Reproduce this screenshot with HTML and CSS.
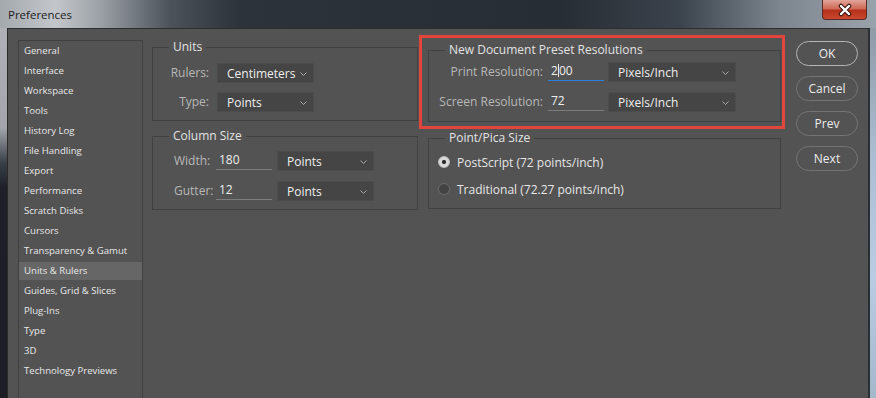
FILE: index.html
```html
<!DOCTYPE html>
<html lang="en">
<head>
  <meta charset="UTF-8">
  <title>Preferences</title>
  <link rel="stylesheet" href="styles.css">
</head>
<body>

  <div class="window">
    <div class="titlebar">
      <span class="title">Preferences</span>
      <div class="close">
        <svg width="20" height="14" viewBox="0 0 20 14">
          <path d="M6 3 L14 11 M14 3 L6 11" stroke="#3a1410" stroke-width="4.5" stroke-linecap="round"/>
          <path d="M6 3 L14 11 M14 3 L6 11" stroke="#ffffff" stroke-width="2.4" stroke-linecap="round"/>
        </svg>
      </div>
    </div>

    <div class="frame">
      <div class="edgeLeft"></div>

      <div class="content">
        <ul class="nav">
          <li>General</li>
          <li>Interface</li>
          <li>Workspace</li>
          <li>Tools</li>
          <li>History Log</li>
          <li>File Handling</li>
          <li>Export</li>
          <li>Performance</li>
          <li>Scratch Disks</li>
          <li>Cursors</li>
          <li>Transparency &amp; Gamut</li>
          <li class="selected">Units &amp; Rulers</li>
          <li>Guides, Grid &amp; Slices</li>
          <li>Plug-Ins</li>
          <li>Type</li>
          <li>3D</li>
          <li>Technology Previews</li>
        </ul>

        <div class="colLeft">
          <fieldset class="group units">
            <legend>Units</legend>
            <div class="rows unitRows">
              <label>Rulers:</label>
              <div class="select">Centimeters <svg class="chev" width="7" height="4" viewBox="0 0 7 4"><path d="M0.5 0.5 L3.5 3.5 L6.5 0.5" fill="none" stroke="#a8a8a8"/></svg></div>
              <label>Type:</label>
              <div class="select">Points <svg class="chev" width="7" height="4" viewBox="0 0 7 4"><path d="M0.5 0.5 L3.5 3.5 L6.5 0.5" fill="none" stroke="#a8a8a8"/></svg></div>
            </div>
          </fieldset>

          <fieldset class="group columns">
            <legend>Column Size</legend>
            <div class="rows columnRows">
              <label>Width:</label>
              <div class="field">180</div>
              <div class="select">Points <svg class="chev" width="7" height="4" viewBox="0 0 7 4"><path d="M0.5 0.5 L3.5 3.5 L6.5 0.5" fill="none" stroke="#a8a8a8"/></svg></div>
              <label>Gutter:</label>
              <div class="field">12</div>
              <div class="select">Points <svg class="chev" width="7" height="4" viewBox="0 0 7 4"><path d="M0.5 0.5 L3.5 3.5 L6.5 0.5" fill="none" stroke="#a8a8a8"/></svg></div>
            </div>
          </fieldset>
        </div>

        <div class="colRight">
          <div class="marker"></div>

          <fieldset class="group preset">
            <legend>New Document Preset Resolutions</legend>
            <div class="rows presetRows">
              <label>Print Resolution:</label>
              <div class="field focused">2<span class="caret"></span>00</div>
              <div class="select">Pixels/Inch <svg class="chev" width="7" height="4" viewBox="0 0 7 4"><path d="M0.5 0.5 L3.5 3.5 L6.5 0.5" fill="none" stroke="#a8a8a8"/></svg></div>
              <label>Screen Resolution:</label>
              <div class="field">72</div>
              <div class="select">Pixels/Inch <svg class="chev" width="7" height="4" viewBox="0 0 7 4"><path d="M0.5 0.5 L3.5 3.5 L6.5 0.5" fill="none" stroke="#a8a8a8"/></svg></div>
            </div>
          </fieldset>

          <fieldset class="group pica">
            <legend>Point/Pica Size</legend>
            <div class="radioRow"><span class="radio checked"></span>PostScript (72 points/inch)</div>
            <div class="radioRow"><span class="radio"></span>Traditional (72.27 points/inch)</div>
          </fieldset>
        </div>

        <div class="buttons">
          <div class="btn primary">OK</div>
          <div class="btn">Cancel</div>
          <div class="btn">Prev</div>
          <div class="btn">Next</div>
        </div>
      </div>

      <div class="edgeRight"></div>
    </div>
  </div>

</body>
</html>
```

FILE: styles.css
```css
body {
  margin: 0;
  font-family: "Open Sans", "Noto Sans", sans-serif;
  background-color: #535353;
  overflow: hidden;
}

.window {
  width: 876px;
  height: 398px;
  display: flex;
  flex-direction: column;
  overflow: hidden;
}

/* window chrome */
.titlebar {
  height: 28px;
  display: flex;
  align-items: center;
  justify-content: space-between;
  background: linear-gradient(to right, #a4a9ae 0, #c3c7cb 55px, #9ca1a7 100px, #4b525a 170px, #2c333b 240px, #272d35 560px, #3b434c 680px, #7d868f 780px, #9aa3ac 876px);
}

.title {
  margin-left: 8px;
  font-size: 11.5px;
  color: #1c1c1c;
}

.close {
  width: 45px;
  height: 20px;
  margin-right: 9px;
  align-self: flex-start;
  display: flex;
  align-items: center;
  justify-content: center;
  border: 1px solid #5a2a24;
  border-top: none;
  border-radius: 0 0 4px 4px;
  box-sizing: border-box;
  background: linear-gradient(to bottom, #e2a59a 0, #cf6a57 45%, #b6301c 55%, #c9482e 100%);
}

.frame {
  flex: 1;
  display: flex;
  min-height: 0;
}

.edgeLeft {
  width: 7px;
  border-right: 1px solid #2a2a2a;
  background: linear-gradient(to bottom, #aeb2b6 0, #a2a6ab 100px, #3a3f46 135px, #1d2127 160px, #1b1f25 100%);
}

.edgeRight {
  width: 6px;
  border-left: 2px solid #2b2f34;
  background: linear-gradient(to bottom, #8f9aa6 0, #aabcd0 120px, #b9cde2 250px, #a4b8cc 100%);
}

.content {
  flex: 1;
  display: flex;
  align-items: flex-start;
  border-top: 1px solid #2e2e2e;
  background-color: #535353;
  color: #e4e4e4;
  font-size: 12px;
}

/* category list */
.nav {
  list-style: none;
  margin: 11px 0 0 10px;
  padding: 1px 0 0;
  width: 125px;
  height: 358px;
  box-sizing: border-box;
  border: 1px solid #404040;
  border-bottom: none;
  font-size: 9.6px;
  color: #e8e8e8;
}

.nav li {
  height: 18px;
  line-height: 18px;
  margin-bottom: 2px;
  padding-left: 5px;
}

.nav li.selected {
  background-color: #666666;
}

/* group boxes */
.colLeft {
  width: 266px;
  margin: 10px 0 0 9px;
}

.colRight {
  position: relative;
  width: 353px;
  margin: 13px 0 0 10px;
}

.group {
  margin: 0;
  border: 1px solid #414141;
  padding: 0 0 0 9px;
}

.group legend {
  margin-left: 7px;
  padding: 0 4px;
  font-size: 12px;
  line-height: 16px;
  color: #e2e2e2;
}

.units {
  padding-top: 8px;
  padding-bottom: 8px;
}

.columns {
  margin-top: 7px;
  padding-top: 7px;
  padding-bottom: 8px;
  padding-left: 21px;
}

.columns legend {
  margin-left: -5px;
}

.preset {
  padding-top: 4px;
  padding-bottom: 9px;
}

.pica {
  margin-top: 8px;
  padding-top: 6px;
  padding-bottom: 9px;
}

.rows {
  display: grid;
  align-items: start;
}

.rows label {
  color: #b8b8b8;
  line-height: 20px;
}

.unitRows {
  grid-template-columns: 47px 97px;
  column-gap: 8px;
  row-gap: 9px;
}

.unitRows label {
  text-align: right;
}

.columnRows {
  grid-template-columns: 42px 56px 102px;
  row-gap: 10px;
}

.columnRows .select {
  margin-left: 5px;
}

.presetRows {
  grid-template-columns: 105px 61px 132px;
  row-gap: 10px;
}

.presetRows label {
  text-align: right;
}

.presetRows .field {
  margin-left: 5px;
}

.presetRows .select {
  margin-left: 4px;
}

.select {
  height: 20px;
  box-sizing: border-box;
  display: flex;
  align-items: center;
  justify-content: space-between;
  padding: 0 6px 0 9px;
  background-color: #454545;
  border: 1px solid #4c4c4c;
  color: #eeeeee;
}

.chev {
  margin-top: 1px;
}

.field {
  height: 18px;
  line-height: 18px;
  padding-left: 3px;
  border-bottom: 1px solid #7c7c7c;
  color: #eeeeee;
}

.field.focused {
  border-bottom-color: #2b7fe0;
}

.caret {
  display: inline-block;
  width: 1px;
  height: 13px;
  vertical-align: -2px;
  background-color: #e8e8e8;
}

.radioRow {
  height: 20px;
  display: flex;
  align-items: center;
  gap: 7px;
  color: #e6e6e6;
}

.radioRow + .radioRow {
  margin-top: 7px;
}

.radio {
  width: 12px;
  height: 12px;
  box-sizing: border-box;
  border-radius: 50%;
  border: 1px solid #6c6c6c;
  background-color: #444444;
}

.radio.checked {
  border-color: #bcbcbc;
  background: radial-gradient(circle, #2e2e2e 0, #2e2e2e 1.8px, #dadada 2.4px);
}

/* red annotation frame */
.marker {
  position: absolute;
  top: -7px;
  left: -9px;
  width: 366px;
  height: 94px;
  box-sizing: border-box;
  border: 3px solid #e1453b;
}

/* dialog buttons */
.buttons {
  width: 62px;
  margin: 12px 0 0 15px;
  display: flex;
  flex-direction: column;
  gap: 10px;
}

.btn {
  height: 25px;
  box-sizing: border-box;
  border: 1px solid #747474;
  border-radius: 13px;
  text-align: center;
  line-height: 23px;
  font-size: 12px;
  color: #ececec;
}

.btn.primary {
  border-color: #b4b4b4;
}
```
